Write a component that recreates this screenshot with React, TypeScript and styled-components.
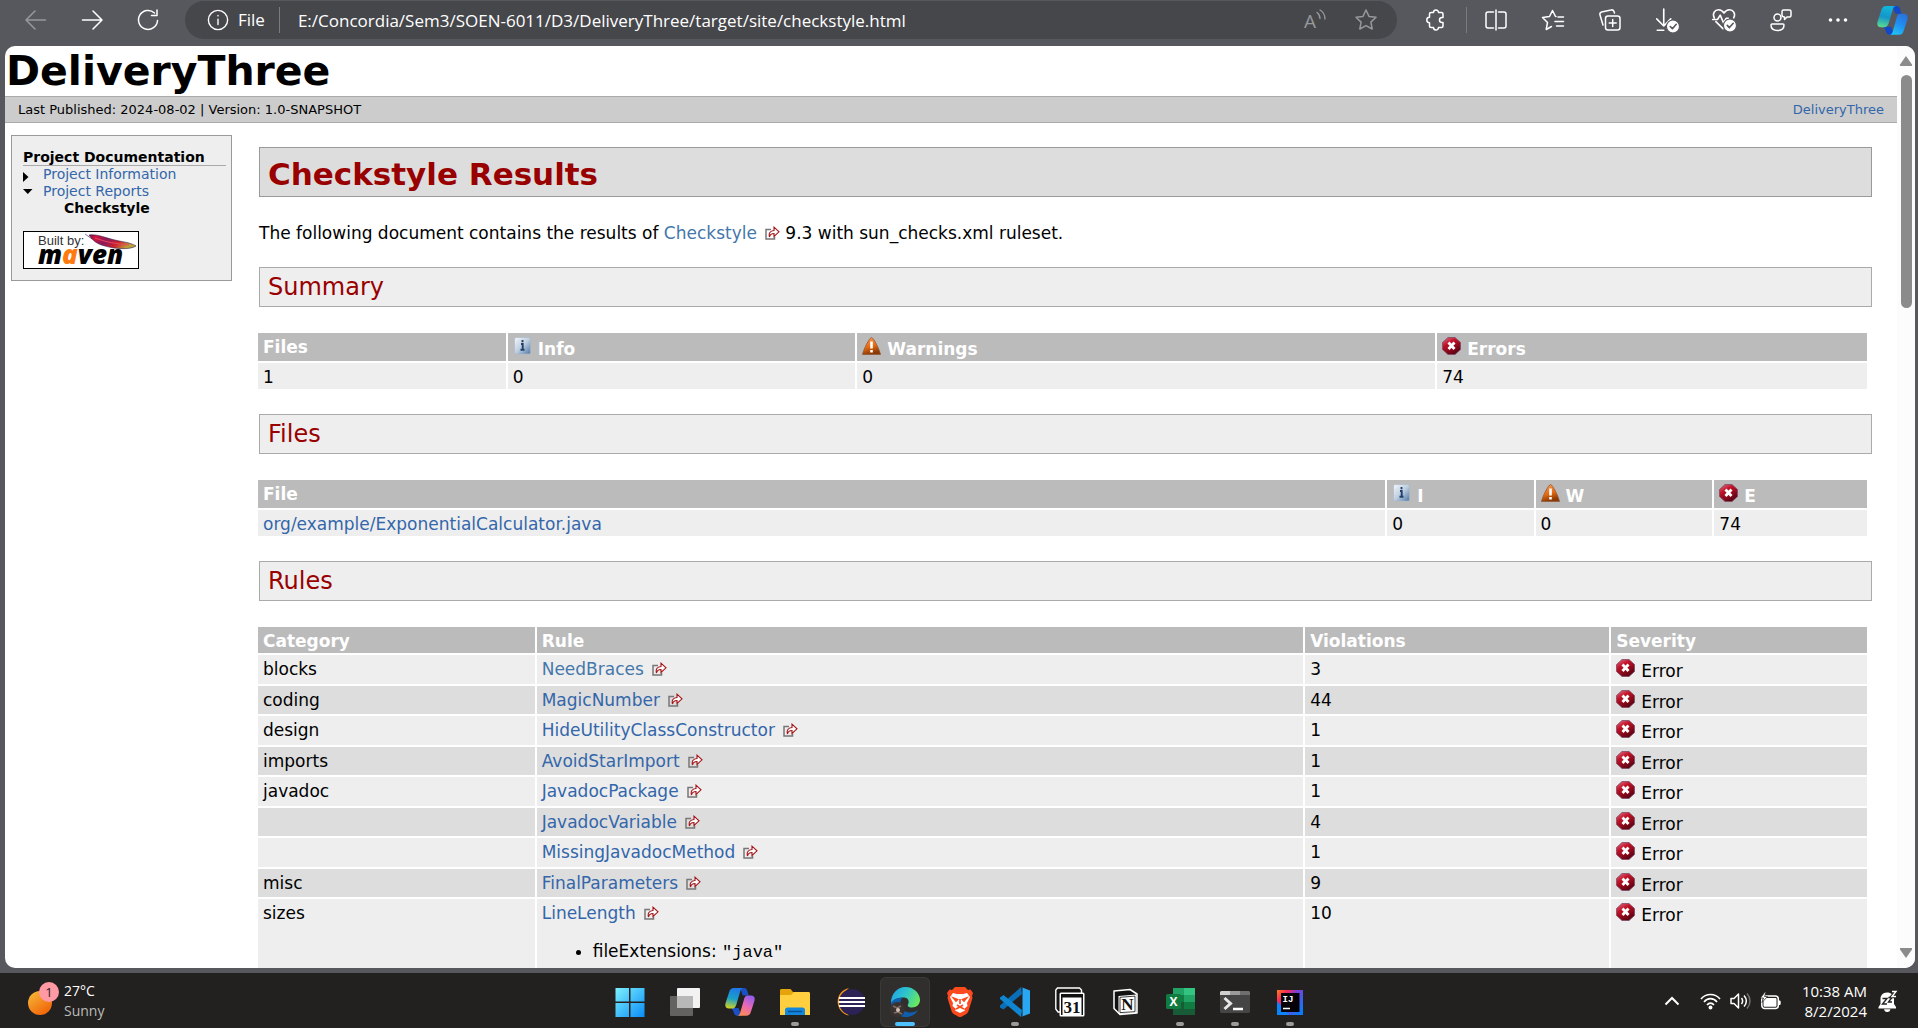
import React from "react";
import styled, { createGlobalStyle } from "styled-components";

const Global = createGlobalStyle`
  * { box-sizing: border-box; }
  body { margin: 0; background: #57585d; }
  button { font: inherit; color: inherit; border: 0; background: none; padding: 0; }
  svg { flex: none; }
`;

const pageFont = '"DejaVu Sans", Verdana, sans-serif';
const uiFont = '"Open Sans", "Segoe UI", sans-serif';

/* ---------- browser frame ---------- */

const Desktop = styled.div`
  display: flex;
  flex-direction: column;
  height: 100vh;
  overflow: hidden;
  background: #57585d;
`;

const Toolbar = styled.header`
  display: flex;
  align-items: flex-start;
  flex: none;
  height: 46px;
  padding-left: 8px;
  color: #fff;
  font-family: ${uiFont};
`;

const ToolButton = styled.button<{ $width?: number; $dim?: boolean }>`
  display: flex;
  align-items: center;
  justify-content: center;
  width: ${(p) => p.$width ?? 57}px;
  height: 40px;
  color: ${(p) => (p.$dim ? "#97989b" : "#fff")};
`;

const AddressBar = styled.div`
  display: flex;
  align-items: center;
  flex: 1;
  height: 38px;
  margin: 1px 7px 0 9px;
  padding: 0 6px 0 22px;
  border-radius: 19px;
  background: #46474b;
`;

const SiteLabel = styled.label`
  margin-left: 9px;
  padding-right: 14px;
  border-right: 1px solid #7a7b7e;
  font-size: 17px;
  line-height: 26px;
`;

const AddressInput = styled.input`
  flex: 1;
  min-width: 0;
  margin-left: 18px;
  padding: 0;
  border: 0;
  outline: 0;
  background: none;
  color: #fff;
  font-family: ${uiFont};
  font-size: 17px;
`;

const Divider = styled.span`
  width: 1px;
  height: 26px;
  margin-top: 7px;
  background: #7a7b7e;
`;

const PageFrame = styled.div`
  display: flex;
  flex: 1;
  min-height: 0;
  margin: 0 3px 5px 5px;
  border-radius: 10px;
  background: #fff;
  overflow: hidden;
`;

const Document = styled.div`
  flex: 1;
  min-width: 0;
  overflow: hidden;
  color: #000;
  font-family: ${pageFont};
  font-size: 17px;
  line-height: 20px;
`;

const Scrollbar = styled.div`
  display: flex;
  flex-direction: column;
  align-items: center;
  width: 18px;
  padding: 10px 0;
  background: #fcfcfc;
`;

const Thumb = styled.div`
  width: 11px;
  height: 233px;
  margin: 9px 0 auto;
  border-radius: 6px;
  background: #8b8b8b;
`;

/* ---------- site page ---------- */

const Banner = styled.div`
  padding: 2px 1px;
  font-size: 41px;
  font-weight: bold;
  line-height: 46px;
`;

const Breadcrumbs = styled.div`
  display: flex;
  justify-content: space-between;
  padding: 1px 13px 0;
  border: solid #aaa;
  border-width: 1px 0;
  background: #ccc;
  font-size: 13px;
  line-height: 24px;
`;

const Link = styled.a<{ $visited?: boolean }>`
  color: ${(p) => (p.$visited ? "#4477aa" : "#3366aa")};
  text-decoration: none;
`;

const Columns = styled.div`
  display: flex;
  align-items: flex-start;
  padding: 12px 25px 0 6px;
`;

const Sidebar = styled.nav`
  width: 221px;
  flex: none;
  padding: 13px 5px 11px 11px;
  border: 1px solid #999;
  background: #eee;
  font-size: 14px;
  line-height: 17px;
`;

const SidebarTitle = styled.h5`
  margin: 0;
  border-bottom: 1px solid #aaa;
  font-size: 14px;
  font-weight: bold;
  line-height: 16px;
`;

const NavList = styled.ul`
  margin: 0;
  padding: 0;
  list-style: none;
`;

const NavItem = styled.li`
  display: flex;
  align-items: center;
`;

const Marker = styled.span`
  display: flex;
  width: 20px;
  padding-top: 4px;
`;

const CurrentItem = styled.li`
  padding-left: 41px;
  font-weight: bold;
`;

const MavenLink = styled.a`
  display: block;
  height: 38px;
  margin-top: 14px;
`;

const Main = styled.main`
  flex: 1;
  min-width: 0;
  padding: 12px 0 0 26px;
`;

const Title = styled.h1`
  margin: 0 0 0 1px;
  padding: 7px 8px 2px;
  border: 1px solid #999;
  background: #ddd;
  color: #900;
  font-size: 31px;
  line-height: 39px;
`;

const Intro = styled.p`
  margin: 26px 0 24px 1px;
`;

const Heading = styled.h2`
  margin: 0 0 26px 1px;
  padding: 4px 8px 3px;
  border: 1px solid #aaa;
  background: #eee;
  color: #900;
  font-size: 24px;
  font-weight: normal;
  line-height: 31px;
`;

const TableWrap = styled.div`
  margin: 0 3px 23px 0;
`;

const Table = styled.table`
  width: 100%;
  table-layout: fixed;
  border-collapse: separate;
  border-spacing: 0;

  th, td {
    padding: 4px 5px 2px;
    border: solid #fff;
    border-width: 0 2px 2px 0;
    background-clip: padding-box;
    text-align: left;
    vertical-align: top;
  }
  th { background-color: #bbb; color: #fff; }
  td { background-color: #eee; }
  tbody tr:nth-child(even) td { background-color: #ddd; }
`;

const RuleBody = styled.tbody`
  tr:nth-child(odd) td { padding-bottom: 3px; }
`;

const Params = styled.ul`
  margin: 18px 0 26px;
  padding-left: 51px;
`;

const Code = styled.code`
  font-family: "Liberation Mono", "Courier New", monospace;
  font-size: 17px;
`;

const StatusSvg = styled.svg`
  margin-right: 6px;
  vertical-align: baseline;
`;

const OutSvg = styled.svg`
  margin: 0 0 0 8px;
  vertical-align: -1px;
`;

/* ---------- taskbar ---------- */

const Taskbar = styled.footer`
  display: grid;
  grid-template-columns: 1fr auto 1fr;
  flex: none;
  height: 55px;
  padding: 0 20px 0 22px;
  background: #22211f;
  color: #fff;
  font-family: ${uiFont};
  font-size: 14px;
  line-height: 20px;
`;

const Weather = styled.button`
  display: flex;
  align-items: center;
  justify-self: start;
  gap: 4px;
  padding-left: 6px;
  text-align: left;
`;

const WeatherIcon = styled.span`
  position: relative;
  width: 32px;
  height: 37px;
`;

const Sun = styled.span`
  display: block;
  width: 24px;
  height: 24px;
  margin-top: 9px;
  border-radius: 50%;
  background: linear-gradient(145deg, #f5bf3c, #f26a0c 80%);
`;

const Count = styled.span`
  position: absolute;
  top: 0;
  left: 11px;
  width: 20px;
  height: 20px;
  border-radius: 50%;
  background: #ff99a4;
  color: #222;
  font-size: 13px;
  line-height: 20px;
  text-align: center;
`;

const Muted = styled.span`
  display: block;
  color: #bdbcbb;
`;

const Apps = styled.div`
  display: flex;
  gap: 5px;
  padding-top: 4px;
`;

const AppButton = styled.button<{ $active?: boolean; $running?: boolean }>`
  display: flex;
  flex-direction: column;
  align-items: center;
  justify-content: space-between;
  width: 50px;
  height: 50px;
  padding: 10px 0 1px;
  border-radius: 6px;
  background: ${(p) => (p.$active ? "#312f2d" : "none")};
  box-shadow: ${(p) => (p.$active ? "inset 0 0 0 1px #3b3937" : "none")};

  &::after {
    content: "";
    width: ${(p) => (p.$active ? 20 : 8)}px;
    height: 4px;
    border-radius: 2px;
    background: ${(p) => (p.$active ? "#4cc2ff" : p.$running ? "#9c9b9a" : "none")};
  }
`;

const Tray = styled.div`
  display: flex;
  align-items: center;
  justify-self: end;
`;

const TrayButton = styled.button`
  display: flex;
  align-items: center;
  gap: 9px;
  margin-right: 20px;
`;

const Clock = styled.button`
  margin-right: 11px;
  font-size: 15px;
  text-align: right;
`;

/* ---------- icons ---------- */

const Line = ({ w = 24, children }: { w?: number; children: React.ReactNode }) => (
  <svg width={w} height={w} viewBox="0 0 24 24" fill="none" stroke="currentColor" strokeWidth="1.5" strokeLinecap="round" strokeLinejoin="round" aria-hidden="true">
    {children}
  </svg>
);

const starPath = "M12 2l3 6.4 7 .9-5.1 4.8 1.3 6.9L12 17.600l-6.200 3.400 1.300-6.900L2 9.300l7-.9z";

const CheckBadge = ({ x, y }: { x: number; y: number }) => (
  <g>
    <circle cx={x} cy={y} r="6" fill="#fff" stroke="#57585d" strokeWidth="1" />
    <path d={`M${x - 2.5} ${y}l2 2 3.500-4`} stroke="#57585d" strokeWidth="1.500" />
  </g>
);

const ErrorIcon = () => (
  <StatusSvg width="19" height="18" viewBox="0 0 19 18" aria-hidden="true">
    <defs>
      <linearGradient id="err" x1="0" y1="0" x2="0.6" y2="1">
        <stop offset="0" stopColor="#e0758f" />
        <stop offset="0.4" stopColor="#c21226" />
        <stop offset="1" stopColor="#5c0312" />
      </linearGradient>
    </defs>
    <path d="M6 .5h7l5.500 5v7l-5.500 5H6L.5 12.500v-7z" fill="url(#err)" stroke="#7d4a68" strokeWidth=".8" />
    <path d="M6.500 5.500l6 6.500M12.500 5.500l-6 6.500" stroke="#fff" strokeWidth="2.800" />
  </StatusSvg>
);

const WarnIcon = () => (
  <StatusSvg width="19" height="18" viewBox="0 0 19 18" aria-hidden="true">
    <defs>
      <linearGradient id="warn" x1="0" y1="0" x2="0.3" y2="1">
        <stop offset="0" stopColor="#f3a05c" />
        <stop offset="0.6" stopColor="#e8690f" />
        <stop offset="1" stopColor="#8b3a06" />
      </linearGradient>
    </defs>
    <path d="M9.500 .5C11.500 .5 17.500 12.500 18.500 17.500H.5C1.500 12.500 7.500 .5 9.500 .5z" fill="url(#warn)" stroke="#8f5b3b" strokeWidth=".8" />
    <path d="M9.500 4.500v7M9.500 13v2.600" stroke="#fff" strokeWidth="2.600" />
  </StatusSvg>
);

const InfoIcon = () => (
  <StatusSvg width="19" height="18" viewBox="0 0 19 18" aria-hidden="true">
    <defs>
      <linearGradient id="info" x1="0" y1="0" x2="1" y2="1">
        <stop offset="0" stopColor="#f4f8fb" />
        <stop offset="0.5" stopColor="#bfcfe0" />
        <stop offset="1" stopColor="#4f77a8" />
      </linearGradient>
    </defs>
    <rect x="1.500" y=".5" width="16" height="16.500" rx="1.500" fill="url(#info)" stroke="#a9b8c8" strokeWidth=".6" />
    <path d="M9.500 3v2.200M8 7h1.700v5.500M7.500 12.700h4" stroke="#22406b" strokeWidth="1.900" fill="none" />
  </StatusSvg>
);

const OutIcon = () => (
  <OutSvg width="15" height="14" viewBox="0 0 15 14" fill="none" aria-hidden="true">
    <path d="M6 3.500H1v9.500h8.500v-2.500" stroke="#777" strokeWidth="1.500" />
    <path d="M4.500 11C3.500 7.500 5 4.800 9 4.500V1.200l5 4.600-5 4.600V7.500C7 7.500 5 8.500 4.500 11z" fill="#fff" stroke="#a31518" strokeWidth="1.100" />
  </OutSvg>
);

const MavenLogo = () => (
  <svg width="116" height="38" viewBox="0 0 116 38" role="img" aria-label="Built by Maven">
    <defs>
      <linearGradient id="feather" x1="0" y1="0" x2="1" y2="0.3">
        <stop offset="0" stopColor="#3c1a58" />
        <stop offset="0.25" stopColor="#d2123c" />
        <stop offset="0.5" stopColor="#8b1a5c" />
        <stop offset="0.75" stopColor="#cf1f2c" />
        <stop offset="1" stopColor="#b9a23a" />
      </linearGradient>
    </defs>
    <rect x=".5" y=".5" width="115" height="37" fill="#fff" stroke="#000" />
    <path d="M62 3l7 5M66 4c8-1 14 2 22 4 10 3 19 3 25 7-6 4-21 3-31 0-8-2-12-5-16-11z" fill="url(#feather)" stroke="#33204a" strokeWidth=".6" />
    <path d="M72 7c10 4 22 6 34 7" stroke="#e9485a" strokeWidth="1" fill="none" />
    <text x="15" y="14" fontFamily="Liberation Sans, sans-serif" fontSize="13" fill="#333">Built by:</text>
    <text x="15" y="33" fontFamily="Open Sans, sans-serif" fontSize="26" fontWeight="800" fontStyle="italic" fill="#000">
      m<tspan fill="#ff7a10">a</tspan>ven
    </text>
  </svg>
);

const CopilotMark = ({ w, id, c }: { w: number; id: string; c: string[] }) => (
  <svg width={w} height={w} viewBox="0 0 30 30" aria-hidden="true">
    <defs>
      <linearGradient id={id + "a"} x1="0.4" y1="0" x2="0.2" y2="1">
        <stop offset="0" stopColor={c[0]} />
        <stop offset="0.5" stopColor={c[1]} />
        <stop offset="1" stopColor={c[2]} />
      </linearGradient>
      <linearGradient id={id + "b"} x1="0.8" y1="0" x2="0.3" y2="1">
        <stop offset="0" stopColor={c[3]} />
        <stop offset="0.5" stopColor={c[4]} />
        <stop offset="1" stopColor={c[5]} />
      </linearGradient>
    </defs>
    <path d="M15 1h4c2.500 0 3 2 3.800 4.500l1 3h-6z" fill={c[6]} />
    <path d="M6.500 21h7l2 5c.6 2 1.500 2.800 3 2.800h-6c-2.500 0-3.200-1.500-4-4z" fill={c[6]} />
    <path d="M9 1h9.500c-2 0-2.700 1.500-3.300 3.500L11.500 17c-.8 2.500-1.500 4.500-4.500 4.500H4C.5 21.500-.2 19 .6 16L4 5.500C4.900 2.500 6 1 9 1z" fill={`url(#${id}a)`} />
    <path d="M21 28.800h-9c2 0 2.700-1.500 3.300-3.500L19 12.500C19.700 10 20.500 8.500 23 8.500h3c3.500 0 4.200 2.500 3.400 5.500L26 24.500c-.9 3-2 4.300-5 4.300z" fill={`url(#${id}b)`} />
  </svg>
);

const iconSvg = { width: 30, height: 30, viewBox: "0 0 30 30", "aria-hidden": true } as const;

const StartIcon = () => (
  <svg {...iconSvg}>
    <defs>
      <linearGradient id="win" x1="0" y1="0" x2="1" y2="1">
        <stop offset="0" stopColor="#7df0ff" />
        <stop offset="1" stopColor="#0a8cf5" />
      </linearGradient>
    </defs>
    <path d="M.5 1H14v13.500H.5zM15.500 1H29.500v13.500H15.500zM.5 16H14v14H.5zM15.500 16H29.500v14H15.500z" fill="url(#win)" />
  </svg>
);

const TaskViewIcon = () => (
  <svg {...iconSvg}>
    <rect x="0" y="9" width="23" height="20" rx="1" fill="#636261" />
    <rect x="7" y="1" width="23" height="20" rx="1" fill="#f2f2f2" />
    <path d="M7 9h16v12H8a1 1 0 0 1-1-1z" fill="#b9b8b8" />
  </svg>
);

const FolderIcon = () => (
  <svg {...iconSvg}>
    <path d="M0 3.500C0 2.500.7 2 1.500 2h9L13 5h16v9H0z" fill="#e5a30c" />
    <path d="M0 8h11l3-3h14.500c1 0 1.500.6 1.500 1.500V28H0z" fill="#ffcf3f" />
    <path d="M5 28v-5c0-1.500 1-2.500 2.500-2.500h15c1.500 0 2.500 1 2.500 2.500v5z" fill="#1287dc" />
    <path d="M8 24.500h14" stroke="#0b4f96" strokeWidth="1.500" />
  </svg>
);

const EclipseIcon = () => (
  <svg {...iconSvg}>
    <path d="M14 1A14 14 0 0 0 14 28.500 17 17 0 0 1 14 1z" fill="#f7941e" />
    <circle cx="17" cy="15" r="13" fill="#2c2255" />
    <path d="M4 11h26M3.500 15h27M4 19h26" stroke="#fff" strokeWidth="2" />
  </svg>
);

const EdgeIcon = () => (
  <svg {...iconSvg}>
    <defs>
      <linearGradient id="edgeTop" x1="0" y1="0.2" x2="1" y2="0.6">
        <stop offset="0" stopColor="#1fa3e8" />
        <stop offset="0.5" stopColor="#2fc5c9" />
        <stop offset="1" stopColor="#6bea5a" />
      </linearGradient>
    </defs>
    <path d="M1 16C1 7 7 0 15.500 0S30 6.500 30 13c0 4.500-3.500 7.500-8 7.500-3.500 0-5-1.500-4-3 1.500-2.500.5-7-4-7C8 10.500 3 13 1 16z" fill="url(#edgeTop)" />
    <path d="M12 11c-3 4-2 12 5 14 4 1.200 8 .3 11-2-2.500 4.500-7 7-12 7C7 30 1 23.500 1 16c2-3.500 6-6 11-5z" fill="#0f5fb0" />
    <circle cx="7.500" cy="22.500" r="7.500" fill="#3a3230" />
    <path d="M3 19l4 2 4-2M4 26l4-1 4 2" stroke="#7d6e66" strokeWidth="1.500" fill="none" />
    <circle cx="8" cy="23" r="2" fill="#d6c3b6" />
  </svg>
);

const BraveIcon = () => (
  <svg {...iconSvg}>
    <path d="M10 0h10l3 3 2.500-.5L28 6l-1 3 .5 2-4 13c-.5 1.500-1.500 2.500-3 3.500l-5.500 3-5.500-3c-1.500-1-2.500-2-3-3.500L2.500 11 3 9 2 6l2.500-3.500L7 3z" fill="#fb4a1d" />
    <path d="M8 6l4 1h6l4-1 3 4-3 6 .5 3-3.500 3 1 1.500L15 26l-5-2.500L11 22l-3.500-3 .5-3-3-6z" fill="#fff" />
    <path d="M8.500 11l4 1.500L11 14zM21.500 11l-4 1.500L19 14zM15 12v5M12 18l3 2 3-2M11 22l4-2 4 2" stroke="#fb4a1d" strokeWidth="1.600" fill="none" />
  </svg>
);

const CodeIcon = () => (
  <svg {...iconSvg}>
    <path d="M21 0l1 7L3.500 22.500 0 20.500v-2z" fill="#0a6fb8" />
    <path d="M0 10.500l3.500-2.500L22 23l-1 7L0 12z" fill="#1086d2" />
    <path d="M21 0l9 3.500v23L21 30c1 0 1.500-.5 1.500-1.500v-27C22.500.5 22 0 21 0z" fill="#2aa7f2" />
  </svg>
);

const CalendarIcon = () => (
  <svg {...iconSvg}>
    <path d="M2.500 1h22l2 2v5H6v17H3L.8 22V3z" fill="#161514" stroke="#fff" strokeWidth="1.400" />
    <rect x="4.500" y="5.500" width="25" height="24" rx="1.500" fill="#fff" />
    <path d="M6 7h22v3.500H6zM6 10.500h1.500V28H6zM26.500 10.500H28V28h-1.500z" fill="#111" />
    <text x="17" y="25.500" textAnchor="middle" fontFamily="Liberation Serif, serif" fontWeight="bold" fontSize="17" fill="#111">31</text>
  </svg>
);

const NotionIcon = () => (
  <svg {...iconSvg}>
    <path d="M4 4l16-1.500 7 4.500V26l-17 1.500L4 21.500z" fill="#111" stroke="#fff" strokeWidth="1.500" strokeLinejoin="round" />
    <path d="M8.500 9l18-1.500V26L8.500 27z" fill="#fff" />
    <path d="M10 10.300l15-1.200v15.600l-15 .9z" fill="#fff" stroke="#111" strokeWidth=".8" />
    <text x="17.500" y="23" textAnchor="middle" fontFamily="Liberation Serif, serif" fontWeight="bold" fontSize="17" fill="#111">N</text>
  </svg>
);

const ExcelIcon = () => (
  <svg {...iconSvg}>
    <path d="M8 1h11v7H8z" fill="#21a366" />
    <path d="M19 1h11v7H19z" fill="#33c481" />
    <path d="M8 8h11v7H8zM19 15h11v7H19z" fill="#107c41" />
    <path d="M19 8h11v7H19z" fill="#21a366" />
    <path d="M8 15h11v7h11v6H8z" fill="#185c37" />
    <rect x="1" y="7" width="15" height="15" rx="1.500" fill="#107c41" />
    <text x="8.500" y="19" textAnchor="middle" fontFamily="Open Sans, sans-serif" fontWeight="bold" fontSize="12" fill="#fff">X</text>
  </svg>
);

const TerminalIcon = () => (
  <svg {...iconSvg}>
    <rect x="0" y="4" width="30" height="22" rx="1.500" fill="#454545" />
    <path d="M1.500 4H10v4H0V5.500A1.500 1.500 0 0 1 1.500 4z" fill="#cfcfcf" />
    <path d="M10 4h10v4H10z" fill="#9a9a9a" />
    <path d="M20 4h8.500A1.500 1.500 0 0 1 30 5.500V8H20z" fill="#6f6f6f" />
    <path d="M4.500 11l6 5.500-6 5.500" stroke="#e8e8e8" strokeWidth="3" fill="none" />
    <path d="M13 22h10" stroke="#fff" strokeWidth="2.500" />
  </svg>
);

const IdeaIcon = () => (
  <svg {...iconSvg}>
    <defs>
      <linearGradient id="idea" x1="0" y1="0" x2="1" y2="0.8">
        <stop offset="0" stopColor="#fc801d" />
        <stop offset="0.25" stopColor="#fe2857" />
        <stop offset="0.5" stopColor="#7a3fd8" />
        <stop offset="1" stopColor="#087cfa" />
      </linearGradient>
    </defs>
    <path d="M2 3h26v25H2z" fill="url(#idea)" />
    <path d="M2 14v14h12z" fill="#0a84fa" />
    <path d="M6 6h18.500v19H6z" fill="#060308" />
    <text x="7.500" y="15" fontFamily="Liberation Mono, monospace" fontWeight="bold" fontSize="9" fill="#fff">IJ</text>
    <path d="M8 21.500h7" stroke="#fff" strokeWidth="1.500" />
  </svg>
);

/* ---------- data ---------- */

const rules = [
  { category: "blocks", rule: "NeedBraces", count: 3, visited: true },
  { category: "coding", rule: "MagicNumber", count: 44 },
  { category: "design", rule: "HideUtilityClassConstructor", count: 1 },
  { category: "imports", rule: "AvoidStarImport", count: 1 },
  { category: "javadoc", rule: "JavadocPackage", count: 1 },
  { category: "", rule: "JavadocVariable", count: 4 },
  { category: "", rule: "MissingJavadocMethod", count: 1 },
  { category: "misc", rule: "FinalParameters", count: 9 },
  { category: "sizes", rule: "LineLength", count: 10, extensions: "java" },
];

const apps = [
  { name: "Start", icon: <StartIcon /> },
  { name: "Task View", icon: <TaskViewIcon /> },
  { name: "Copilot", icon: <CopilotMark w={30} id="cpt" c={["#1f7ae8", "#1aa0c8", "#d7d31c", "#8f5cf0", "#e768b8", "#ff8a4c", "#1b4fc4"]} /> },
  { name: "File Explorer", icon: <FolderIcon />, running: true },
  { name: "Eclipse", icon: <EclipseIcon /> },
  { name: "Microsoft Edge", icon: <EdgeIcon />, active: true },
  { name: "Brave", icon: <BraveIcon /> },
  { name: "Visual Studio Code", icon: <CodeIcon />, running: true },
  { name: "Notion Calendar", icon: <CalendarIcon /> },
  { name: "Notion", icon: <NotionIcon /> },
  { name: "Excel", icon: <ExcelIcon />, running: true },
  { name: "Terminal", icon: <TerminalIcon />, running: true },
  { name: "IntelliJ IDEA", icon: <IdeaIcon />, running: true },
];

const Cols = ({ widths }: { widths: string[] }) => (
  <colgroup>
    {widths.map((width, i) => (
      <col key={i} style={{ width }} />
    ))}
  </colgroup>
);

/* ---------- sections ---------- */

const BrowserToolbar = () => (
  <Toolbar>
    <ToolButton $width={56} $dim aria-label="Back">
      <Line><path d="M21.500 12H2.500M11 3L2 12l9 9" /></Line>
    </ToolButton>
    <ToolButton $width={56} aria-label="Forward">
      <Line><path d="M2.500 12h19M13 3l9 9-9 9" /></Line>
    </ToolButton>
    <ToolButton $width={56} aria-label="Refresh">
      <Line><path d="M21.500 12.500A9.500 9.500 0 1 1 18.500 5M21 2v5.500h-5.500" /></Line>
    </ToolButton>
    <AddressBar>
      <Line w={22}><circle cx="12" cy="12" r="10.500" /><path d="M12 11v6M12 7v.5" /></Line>
      <SiteLabel htmlFor="address">File</SiteLabel>
      <AddressInput id="address" spellCheck={false} defaultValue="E:/Concordia/Sem3/SOEN-6011/D3/DeliveryThree/target/site/checkstyle.html" />
      <ToolButton $width={51} $dim aria-label="Read aloud">
        <Line>
          <text x="1" y="20" fontFamily="Open Sans, sans-serif" fontSize="19" fill="currentColor" stroke="none">A</text>
          <path d="M14 4.500c2 1.500 3 3.500 3 6M17 2c3.500 2 5 5 5 9" strokeWidth="1.300" />
        </Line>
      </ToolButton>
      <ToolButton $width={51} $dim aria-label="Add to favorites">
        <Line><path d={starPath} /></Line>
      </ToolButton>
    </AddressBar>
    <ToolButton $width={62} aria-label="Extensions">
      <Line>
        <path d="M8 4.500h2.500a2.500 2.500 0 0 1 5 0H18.500a1.500 1.500 0 0 1 1.500 1.500v3.500h-1a2.500 2.500 0 0 0 0 5h1V18a1.500 1.500 0 0 1-1.500 1.500h-3a2.500 2.500 0 0 1-5 0H8A1.500 1.500 0 0 1 6.500 18v-3.300a2.700 2.700 0 0 1 0-5.400V6A1.500 1.500 0 0 1 8 4.500z" />
      </Line>
    </ToolButton>
    <Divider />
    <ToolButton aria-label="Split screen">
      <Line><path d="M9.500 4H4a2 2 0 0 0-2 2v12a2 2 0 0 0 2 2h5.500M14.500 4H20a2 2 0 0 1 2 2v12a2 2 0 0 1-2 2h-5.500M12 2v20" /></Line>
    </ToolButton>
    <ToolButton aria-label="Favorites">
      <Line><path d="M15 8.500h-.5L11.500 2.500 8.500 8.500 1.500 9.500l5 5-1.300 7 5.300-3M17 9H22.500M14 13.500h8.500M15.500 18h7" /></Line>
    </ToolButton>
    <ToolButton aria-label="Collections">
      <Line>
        <rect x="7.500" y="8" width="14.500" height="14" rx="2.500" />
        <path d="M14.700 11.500v7M11.200 15h7M5 17L2 7a2.500 2.500 0 0 1 1.500-3L13 2a2.500 2.500 0 0 1 3 1.500l.5 1.500" />
      </Line>
    </ToolButton>
    <ToolButton aria-label="Downloads">
      <Line w={26}><path d="M9 2v15M2.500 11L9 17.500l6.500-6.500M3 21.500h6" /><CheckBadge x={17.5} y={18} /></Line>
    </ToolButton>
    <ToolButton aria-label="Browser essentials">
      <Line w={26}>
        <path d="M3 10C1 6 3.500 2.500 7 2.500c2.500 0 4 1.500 5 3 1-1.500 2.500-3 5-3 3.500 0 6 3.500 4 7.500M4.500 13.500L11 20M1.500 11.500H6l2.500-4 3 7 2.500-4h2" />
        <CheckBadge x={17.5} y={17} />
      </Line>
    </ToolButton>
    <ToolButton aria-label="Profile feedback">
      <Line>
        <circle cx="8.500" cy="9.500" r="3.500" />
        <path d="M3 16h11a1 1 0 0 1 1 1c0 3.500-2.500 5.500-6.500 5.500S2 20.500 2 17a1 1 0 0 1 1-1zM14.500 2h6A1.500 1.500 0 0 1 22 3.500v4A1.500 1.500 0 0 1 20.500 9H18l-2.500 2.500V9C14 9 13 8 13 7V3.500A1.500 1.500 0 0 1 14.500 2" />
      </Line>
    </ToolButton>
    <ToolButton aria-label="Settings and more">
      <Line><g fill="currentColor" stroke="none"><circle cx="4.500" cy="12" r="1.800" /><circle cx="12" cy="12" r="1.800" /><circle cx="19.500" cy="12" r="1.800" /></g></Line>
    </ToolButton>
    <ToolButton $width={52} aria-label="Copilot">
      <CopilotMark w={31} id="cpb" c={["#12b5d9", "#1496c9", "#5fdc8c", "#2a6fdc", "#1f8ff2", "#21c3f5", "#1147c9"]} />
    </ToolButton>
  </Toolbar>
);

const SiteSidebar = () => (
  <Sidebar aria-label="Project documentation">
    <SidebarTitle>Project Documentation</SidebarTitle>
    <NavList>
      <NavItem>
        <Marker><svg width="10" height="10" viewBox="0 0 10 10" aria-hidden="true"><path d="M0 0l5.500 5L0 10z" /></svg></Marker>
        <Link href="#info">Project Information</Link>
      </NavItem>
      <NavItem>
        <Marker><svg width="10" height="10" viewBox="0 0 10 10" aria-hidden="true"><path d="M0 0h9.500L4.800 5z" /></svg></Marker>
        <Link href="#reports">Project Reports</Link>
      </NavItem>
      <CurrentItem>Checkstyle</CurrentItem>
    </NavList>
    <MavenLink href="#maven"><MavenLogo /></MavenLink>
  </Sidebar>
);

const Report = () => (
  <Main>
    <Title>Checkstyle Results</Title>
    <Intro>
      The following document contains the results of <Link $visited href="#checkstyle">Checkstyle<OutIcon /></Link> 9.3 with sun_checks.xml ruleset.
    </Intro>

    <Heading>Summary</Heading>
    <TableWrap>
      <Table>
        <Cols widths={["15.5%", "21.7%", "36%", "26.8%"]} />
        <thead>
          <tr><th>Files</th><th><InfoIcon />Info</th><th><WarnIcon />Warnings</th><th><ErrorIcon />Errors</th></tr>
        </thead>
        <tbody>
          <tr><td>1</td><td>0</td><td>0</td><td>74</td></tr>
        </tbody>
      </Table>
    </TableWrap>

    <Heading>Files</Heading>
    <TableWrap>
      <Table>
        <Cols widths={["70.1%", "9.2%", "11.1%", "9.6%"]} />
        <thead>
          <tr><th>File</th><th><InfoIcon />I</th><th><WarnIcon />W</th><th><ErrorIcon />E</th></tr>
        </thead>
        <tbody>
          <tr><td><Link href="#file">org/example/ExponentialCalculator.java</Link></td><td>0</td><td>0</td><td>74</td></tr>
        </tbody>
      </Table>
    </TableWrap>

    <Heading>Rules</Heading>
    <TableWrap>
      <Table>
        <Cols widths={["17.3%", "47.7%", "19%", "16%"]} />
        <thead>
          <tr><th>Category</th><th>Rule</th><th>Violations</th><th>Severity</th></tr>
        </thead>
        <RuleBody>
          {rules.map((r) => (
            <tr key={r.rule}>
              <td>{r.category}</td>
              <td>
                <Link $visited={r.visited} href={`#${r.rule}`}>{r.rule}<OutIcon /></Link>
                {r.extensions && (
                  <Params>
                    <li>fileExtensions: <Code>"{r.extensions}"</Code></li>
                  </Params>
                )}
              </td>
              <td>{r.count}</td>
              <td><ErrorIcon />Error</td>
            </tr>
          ))}
        </RuleBody>
      </Table>
    </TableWrap>
  </Main>
);

const SystemTaskbar = () => (
  <Taskbar>
    <Weather>
      <WeatherIcon><Sun /><Count>1</Count></WeatherIcon>
      <span>27°C<Muted>Sunny</Muted></span>
    </Weather>
    <Apps>
      {apps.map((a) => (
        <AppButton key={a.name} aria-label={a.name} $active={a.active} $running={a.running}>{a.icon}</AppButton>
      ))}
    </Apps>
    <Tray>
      <TrayButton aria-label="Show hidden icons">
        <svg width="16" height="10" viewBox="0 0 16 10" fill="none" stroke="#fff" strokeWidth="2" aria-hidden="true"><path d="M1.500 8.500L8 2l6.500 6.500" /></svg>
      </TrayButton>
      <TrayButton aria-label="Network, volume and battery">
        <svg width="21" height="18" viewBox="0 0 21 18" fill="none" stroke="#fff" strokeWidth="1.600" aria-hidden="true">
          <path d="M1 7C6 1 15 1 20 7M4 10c3.500-4.500 9.500-4.500 13 0M7 13c2-2.500 5-2.500 7 0" /><circle cx="10.500" cy="15.500" r="1.200" fill="#fff" />
        </svg>
        <svg width="21" height="18" viewBox="0 0 21 18" fill="none" stroke="#fff" strokeWidth="1.500" strokeLinejoin="round" aria-hidden="true">
          <path d="M1 6.500h3L8.500 2v14L4 11.500H1zM11.500 6c1.500 2 1.500 4 0 6M14 3.500c3 3.500 3 7.500 0 11" /><path d="M17 1.500c4 4.500 4 10.500 0 15" stroke="#72716f" />
        </svg>
        <svg width="22" height="18" viewBox="0 0 22 18" aria-hidden="true">
          <rect x="1.800" y="4" width="16.500" height="12.500" rx="3" fill="none" stroke="#fff" strokeWidth="1.500" />
          <rect x="3.500" y="6" width="13" height="8.700" rx="1" fill="#fff" />
          <path d="M19 8.500h1c1 0 1 4.500 0 4.500h-1z" fill="#fff" />
          <path d="M5 0L.5 6h3L2 10.500 7.500 4.500H4.500L6 0z" fill="#fff" stroke="#22211f" strokeWidth=".7" />
        </svg>
      </TrayButton>
      <Clock>10:38 AM<br />8/2/2024</Clock>
      <svg width="20" height="22" viewBox="0 0 20 22" aria-hidden="true">
        <path d="M9 2.500c-4.500 0-6.500 3-6.500 6.500V14L.5 17v1.500h17.500V17L16 14V9C16 5 13 2.500 9 2.500z" fill="#fff" />
        <path d="M6 19.300h6.500a3.300 3.300 0 0 1-6.500 0z" fill="#fff" />
        <path d="M4.500 8.500h4.500l-4.500 5.500h4.500M10.500 7.500h3.500l-3.500 4.500h3.500" stroke="#22211f" strokeWidth="1.400" fill="none" />
        <path d="M14 1.500h4l-4 5h4" stroke="#22211f" strokeWidth="3.500" fill="none" /><path d="M14 1.500h4l-4 5h4" stroke="#fff" strokeWidth="1.400" fill="none" />
      </svg>
    </Tray>
  </Taskbar>
);

export default function App() {
  return (
    <Desktop>
      <Global />
      <BrowserToolbar />
      <PageFrame>
        <Document>
          <Banner>DeliveryThree</Banner>
          <Breadcrumbs>
            <span>Last Published: 2024-08-02 | Version: 1.0-SNAPSHOT</span>
            <Link href="#home">DeliveryThree</Link>
          </Breadcrumbs>
          <Columns>
            <SiteSidebar />
            <Report />
          </Columns>
        </Document>
        <Scrollbar aria-hidden="true">
          <svg width="14" height="10" viewBox="0 0 14 10"><path d="M7 0l6 8.500c.3.800 0 1.500-1 1.500H2C1 10 .7 9.300 1 8.500z" fill="#8b8b8b" /></svg>
          <Thumb />
          <svg width="14" height="10" viewBox="0 0 14 10"><path d="M7 10L1 1.500C.7.700 1 0 2 0h10c1 0 1.300.7 1 1.500z" fill="#8b8b8b" /></svg>
        </Scrollbar>
      </PageFrame>
      <SystemTaskbar />
    </Desktop>
  );
}
